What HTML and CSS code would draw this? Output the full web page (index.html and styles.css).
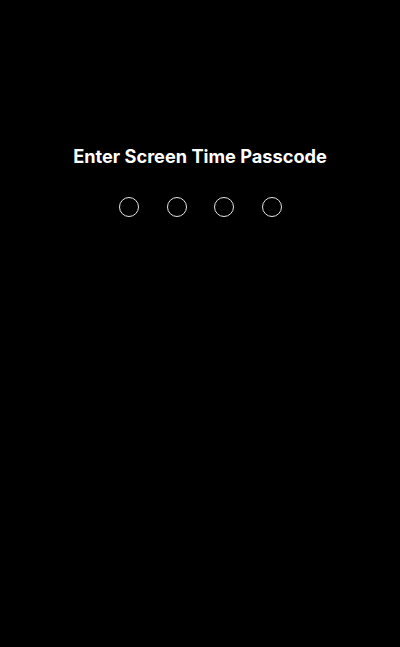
FILE: index.html
```html
<!DOCTYPE html>
<html>
<head>
<meta charset="utf-8">
<link rel="stylesheet" href="styles.css">
</head>
<body>
<main class="screen">
  <h1 class="title">Enter Screen Time Passcode</h1>
  <div class="dots">
    <span class="dot"></span>
    <span class="dot"></span>
    <span class="dot"></span>
    <span class="dot"></span>
  </div>
</main>
</body>
</html>
```
FILE: styles.css
```css
html, body {
  margin: 0;
  padding: 0;
  background: #000;
  height: 100%;
}
.screen {
  display: flex;
  flex-direction: column;
  align-items: center;
  padding-top: 144px;
  font-family: Inter, "Noto Sans", sans-serif;
  color: #fff;
}
.title {
  margin: 0;
  font-size: 18.2px;
  font-weight: 700;
  line-height: 24px;
  letter-spacing: 0;
}
.dots {
  display: flex;
  gap: 27.5px;
  margin-top: 29px;
  padding-left: 1px;
}
.dot {
  width: 18px;
  height: 18px;
  border: 1.2px solid #e6e6e6;
  border-radius: 50%;
}
```
